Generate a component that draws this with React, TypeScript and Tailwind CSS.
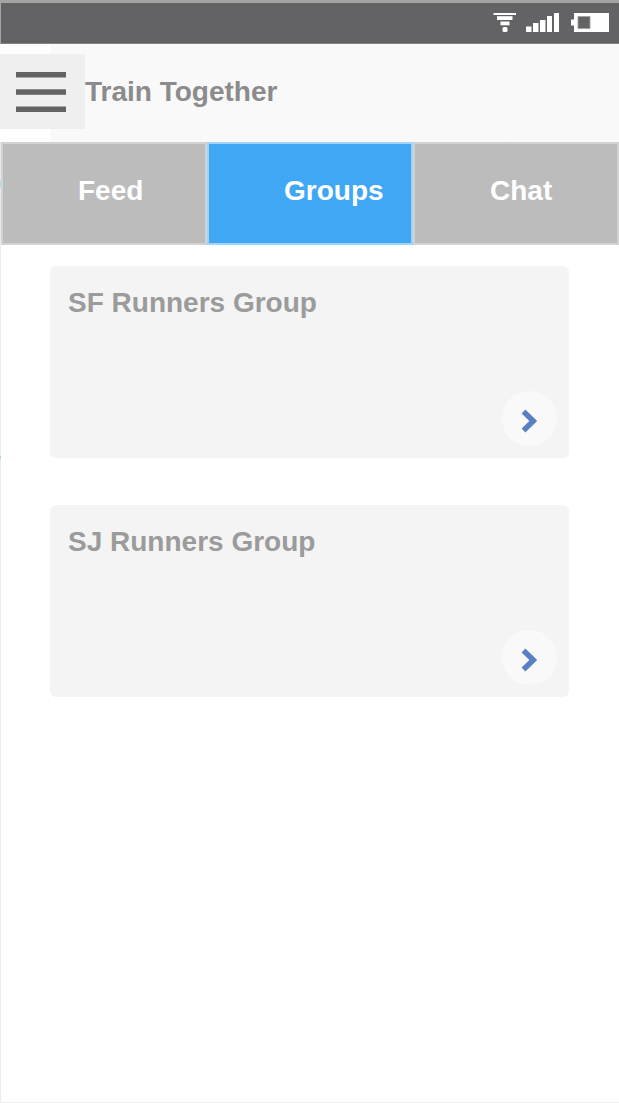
const tabs = ["Feed", "Groups", "Chat"];
const groups = ["SF Runners Group", "SJ Runners Group"];

function StatusIcons() {
  return (
    <svg
      className="h-6 w-[116px]"
      viewBox="0 0 116 24"
      fill="#fff"
      role="img"
      aria-label="Wi-Fi, signal and battery"
    >
      <rect x="0.5" y="2" width="22.5" height="2" />
      <rect x="4" y="5.2" width="15.5" height="3.8" />
      <rect x="7.5" y="10.5" width="9" height="3.8" />
      <rect x="9.5" y="16" width="5" height="5" rx="1.5" />
      <rect x="33" y="15.5" width="5.5" height="5.5" />
      <rect x="40" y="12" width="5.5" height="9" />
      <rect x="47" y="9" width="5.5" height="12" />
      <rect x="54" y="5" width="5" height="16" />
      <rect x="61" y="2" width="5" height="19" />
      <rect x="78" y="8.5" width="4" height="6" />
      <rect x="81" y="2" width="35" height="19" />
      <rect x="85" y="5.5" width="12" height="12" fill="#636365" stroke="#a0a0a0" strokeWidth="0.8" />
    </svg>
  );
}

function GroupCard({ name }: { name: string }) {
  return (
    <article className="flex h-48 flex-col justify-between rounded-md bg-[#f4f4f4] pt-[19px] pr-3 pb-3 pl-[18px]">
      <h2 className="text-[28px] leading-9 font-bold text-[#9b9b9b]">{name}</h2>
      <button
        type="button"
        aria-label={`Open ${name}`}
        className="size-[55px] self-end rounded-full bg-[#f9f9f9]"
      >
        <svg className="size-[55px]" viewBox="0 0 55 55" fill="none" aria-hidden="true">
          <path d="M21.5 20.5 L31.3 30 L21.5 39.5" stroke="#5a80c4" strokeWidth="5.4" />
        </svg>
      </button>
    </article>
  );
}

export default function App() {
  return (
    <div className="relative flex min-h-screen flex-col border-b border-[#efefef] bg-white font-['Liberation_Sans',Arial,sans-serif]">
      <div className="flex h-11 items-center justify-end border-t-[3px] border-b border-l border-t-[#a4a4a4] border-b-[#828284] border-l-[#a4a4a4] bg-[#636365] pr-[10px]">
        <StatusIcons />
      </div>
      <div className="flex grow flex-col border-l border-[#ebebeb]">
        <header className="-ml-px flex h-[98px] items-center bg-linear-to-r from-white from-[50px] to-[#f9f9f9] to-[50px] pb-[3px]">
          <button
            type="button"
            aria-label="Menu"
            className="flex h-[75px] w-[85px] items-center bg-[#efefef] pl-4"
          >
            <svg className="h-10 w-[50px]" viewBox="0 0 50 40" fill="#636363" aria-hidden="true">
              <rect y="0" width="50" height="5.5" />
              <rect y="17.3" width="50" height="5.5" />
              <rect y="34.5" width="50" height="5.5" />
            </svg>
          </button>
          <h1 className="text-[28px] leading-9 font-bold text-[#8b8b8b]">Train Together</h1>
        </header>
        <nav aria-label="Sections" className="grid grid-cols-3">
          {tabs.map((tab) => (
            <button
              key={tab}
              type="button"
              aria-current={tab === "Groups" ? "page" : undefined}
              className={
                tab === "Groups"
                  ? "h-[103px] border-2 border-[#a3d3f8] bg-[#40a7f5] pb-[6px] pl-[75px] text-left text-[28px] leading-9 font-bold text-white"
                  : "h-[103px] border-2 border-[#d2d2d2] bg-[#bcbcbc] pb-[6px] pl-[75px] text-left text-[28px] leading-9 font-bold text-white"
              }
            >
              {tab}
            </button>
          ))}
        </nav>
        <main className="flex flex-col gap-[47px] pt-[21px] pr-[50px] pl-[49px]">
          {groups.map((name) => (
            <GroupCard key={name} name={name} />
          ))}
        </main>
      </div>
      <span className="absolute top-[180px] left-0 h-2 w-px bg-[#b5dcf5]" />
      <span className="absolute top-[456px] left-0 h-[3px] w-px bg-[#a9d7f2]" />
    </div>
  );
}
